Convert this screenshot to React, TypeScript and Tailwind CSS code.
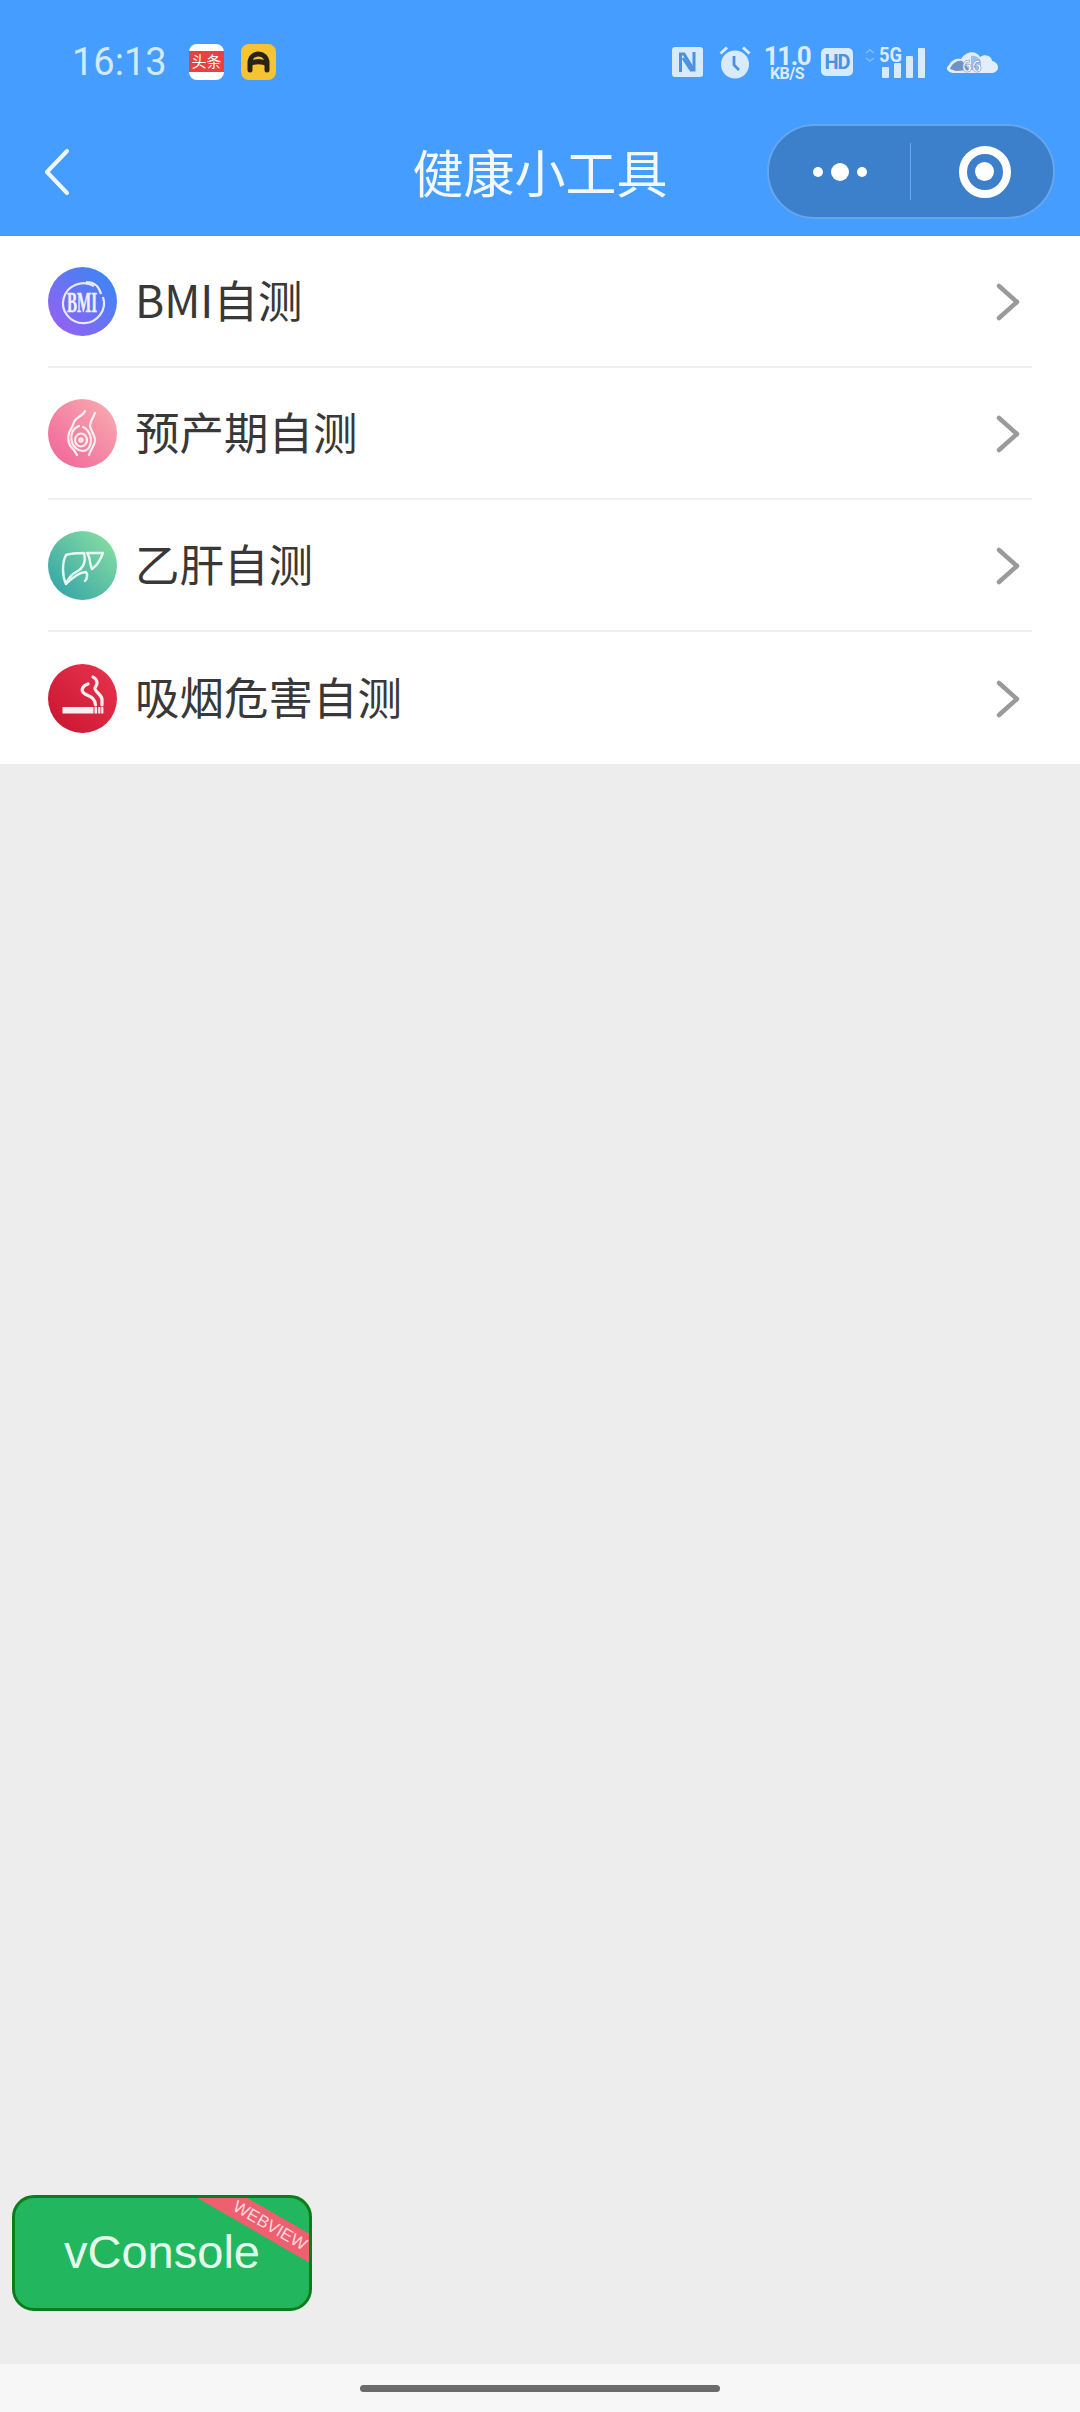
import React from "react";

const Chevron = () => (
  <svg width="24" height="38" viewBox="0 0 24 38" fill="none" className="shrink-0 mt-[2px]">
    <path d="M3 3 L21 19 L3 35" stroke="#9a9a9a" strokeWidth="4.5" strokeLinecap="round" strokeLinejoin="round" />
  </svg>
);

const BmiIcon = () => (
  <svg width="69" height="69" viewBox="0 0 69 69" className="shrink-0 overflow-visible">
    <defs>
      <linearGradient id="bmi" x1="1" y1="0" x2="0" y2="1">
        <stop offset="0" stopColor="#2f8bf5" />
        <stop offset="1" stopColor="#a05cf2" />
      </linearGradient>
    </defs>
    <circle cx="34.5" cy="34.5" r="34.5" fill="url(#bmi)" />
    <path d="M46 19 A20.5 20 0 1 0 55 30" fill="none" stroke="#e8e8ff" strokeWidth="2.2" />
    <path d="M38 15 Q50 15 53 27" fill="none" stroke="#e8e8ff" strokeWidth="2.2" />
    <text x="19" y="45" fontFamily="'Liberation Serif', serif" fontSize="29" fontWeight="700" fill="#eef0ff" stroke="#eef0ff" strokeWidth="0.5" textLength="30" lengthAdjust="spacingAndGlyphs">BMI</text>
  </svg>
);

const PregIcon = () => (
  <svg width="69" height="69" viewBox="0 0 69 69" fill="none" className="shrink-0">
    <defs>
      <linearGradient id="preg" x1="1" y1="0" x2="0" y2="1">
        <stop offset="0" stopColor="#f9b0b0" />
        <stop offset="1" stopColor="#f0609a" />
      </linearGradient>
    </defs>
    <circle cx="34.5" cy="34.5" r="34.5" fill="url(#preg)" />
    <g stroke="#fdeef0" strokeWidth="2.2" strokeLinecap="round">
      <path d="M37 12 C35 17 28 18 26 23 C25 27 23 30 21 34 C19 40 21 46 24 49 C27 52 28 54 29 56" />
      <path d="M47 14 C45 19 42 23 42 27 C43 32 47 36 47 41 C47 46 43 50 41 56" />
      <path d="M31 27 C25 29 22.5 35 23.5 41 C24.5 48 30 52 35 52 C40 52 43 47 43 41 C43 34 38 29 35 28" />
      <ellipse cx="33" cy="41" rx="6" ry="6.5" />
      <circle cx="33" cy="41" r="1.6" />
    </g>
  </svg>
);

const LiverIcon = () => (
  <svg width="69" height="69" viewBox="0 0 69 69" fill="none" className="shrink-0">
    <defs>
      <linearGradient id="liver" x1="1" y1="0" x2="0" y2="1">
        <stop offset="0" stopColor="#8fe3a2" />
        <stop offset="1" stopColor="#2b9fa8" />
      </linearGradient>
    </defs>
    <circle cx="34.5" cy="34.5" r="34.5" fill="url(#liver)" />
    <g stroke="#e4fbf2" strokeWidth="2.4" strokeLinejoin="round" strokeLinecap="round">
      <path d="M18 24 C24 22 30 22 36 22 C38 30 36 37 28 41 C24 43 20 48 18 53 C14 44 14 32 18 24 Z" />
      <path d="M39 22 L55 22 C52 30 47 36 44 38 C41 32 43 27 39 22 Z" />
      <path d="M18 53 C24 47 32 41 38 41 C40 43 39 48 37 50" />
    </g>
  </svg>
);

const SmokeIcon = () => (
  <svg width="69" height="69" viewBox="0 0 69 69" fill="none" className="shrink-0">
    <defs>
      <linearGradient id="smoke" x1="1" y1="0" x2="0" y2="1">
        <stop offset="0" stopColor="#ea3450" />
        <stop offset="1" stopColor="#c7152f" />
      </linearGradient>
    </defs>
    <circle cx="34.5" cy="34.5" r="34.5" fill="url(#smoke)" />
    <rect x="14.5" y="43" width="31" height="6.5" fill="#fbeef0" />
    <rect x="46.5" y="43" width="2.6" height="6.5" fill="#fbeef0" />
    <rect x="50.2" y="43" width="2.2" height="6.5" fill="#fbeef0" />
    <rect x="53.2" y="43" width="2.2" height="6.5" fill="#fbeef0" />
    <g stroke="#fbeef0" strokeWidth="3.2" strokeLinecap="round">
      <path d="M40 20 C34 22 32 27 37 30 C43 33 47 34 47.5 41" />
      <path d="M45 13 C50 16 50 20 47 24 C46 27 53 30 54 35 L54 41" />
    </g>
  </svg>
);

const rows = [
  { label: "BMI自测", icon: <BmiIcon /> },
  { label: "预产期自测", icon: <PregIcon /> },
  { label: "乙肝自测", icon: <LiverIcon /> },
  { label: "吸烟危害自测", icon: <SmokeIcon /> },
];

const StatusIcons = () => (
  <div className="flex items-center">
    <svg width="31" height="30" viewBox="0 0 31 30" className="shrink-0">
      <rect width="31" height="30" rx="3" fill="#d8eafd" />
      <path d="M8.5 25 V7 H12 L21 22" stroke="#4c91e0" strokeWidth="3" fill="none" />
      <path d="M22 5 V23 H19 L11 11" stroke="#4c91e0" strokeWidth="3" fill="none" />
    </svg>
    <svg width="32" height="34" viewBox="0 0 32 34" className="ml-[16px] shrink-0">
      <circle cx="16" cy="19.5" r="14" fill="#d8eafd" />
      <path d="M15 11 L15 20 L20 25" stroke="#4c91e0" strokeWidth="2.8" fill="none" />
      <path d="M1.5 8.5 L8 2.5 M30.5 8.5 L24 2.5" stroke="#d8eafd" strokeWidth="3" />
    </svg>
    <div className="ml-[15px] w-[42px] flex flex-col items-center text-[#dcecfe] font-bold leading-none font-['Roboto',sans-serif]">
      <span className="text-[26px] h-[22px] leading-[22px] tracking-[-1.5px]">11.0</span>
      <span className="text-[16px] h-[13px] leading-[13px] tracking-[-0.5px] whitespace-nowrap">KB/S</span>
    </div>
    <div className="ml-[13px] w-[32px] h-[28px] rounded-[5px] bg-[#d8eafd] flex items-center justify-center text-[#4c91e0] text-[20px] font-bold leading-none tracking-[-1px] font-['Roboto',sans-serif]">
      HD
    </div>
    <svg width="60" height="32" viewBox="0 0 60 32" className="ml-[12px] shrink-0 overflow-visible">
      <text x="14" y="16" fontFamily="Roboto, sans-serif" fontSize="20" fontWeight="700" fill="#dcecfe" textLength="23" lengthAdjust="spacingAndGlyphs">5G</text>
      <path d="M1 7 l4 -3 l4 3 M1 12 l4 3 l4 -3" stroke="#82bdfd" strokeWidth="1.5" fill="none" />
      <rect x="17" y="21" width="7" height="11" rx="1" fill="#d8eafd" />
      <rect x="29" y="17" width="7" height="15" rx="1" fill="#d8eafd" />
      <rect x="41" y="10" width="7" height="22" rx="1" fill="#d8eafd" />
      <rect x="53" y="2" width="7" height="30" rx="1" fill="#d8eafd" />
    </svg>
    <svg width="53" height="23" viewBox="0 0 53 23" className="ml-[21px] shrink-0 overflow-visible">
      <path d="M7 22 C1 21 -1 17 3 14 C6 8 12 7 15 8 C20 0 30 -1 34 6 C40 2 46 6 46 10 C53 11 55 21 46 22 Z" fill="#e2eefc" />
      <path d="M4 18 C6 12 12 9 16 10 L24 19 L10 20 Z" fill="#6f92c4" />
      <path d="M25 5 C30 4 33 7 35 10 L35 19 L25 19 Z" fill="#9dbfe8" />
      <text x="16" y="21" fontFamily="Roboto, sans-serif" fontSize="17" fontWeight="700" fill="#f6faff" stroke="#5f88bf" strokeWidth="0.5">66</text>
    </svg>
  </div>
);

export default function App() {
  return (
    <div className="w-[1080px] h-[2412px] relative overflow-hidden flex flex-col bg-[#ededee] font-['Noto_Sans_CJK_SC','Roboto',sans-serif]">
      <header className="h-[236px] bg-[#459dff] flex flex-col shrink-0">
        <div className="h-[124px] pl-[72px] pr-[81px] flex items-center justify-between">
          <div className="flex items-center">
            <span className="w-[92px] text-[38px] leading-none text-[#d2e9fd] font-['Roboto',sans-serif] whitespace-nowrap">16:13</span>
            <svg width="35" height="36" viewBox="0 0 35 36" className="ml-[25px] shrink-0">
              <rect width="35" height="36" rx="8" fill="#ffffff" />
              <rect y="7" width="35" height="21" fill="#e8413f" />
              <text x="17.5" y="23" textAnchor="middle" fontFamily="'Noto Sans CJK SC', sans-serif" fontSize="15" fill="#ffffff">头条</text>
            </svg>
            <svg width="35" height="36" viewBox="0 0 35 36" className="ml-[17px] shrink-0">
              <rect width="35" height="36" rx="8" fill="#f6c433" />
              <path d="M9 26 V19 C9 7 26 7 26 19 V26" fill="none" stroke="#2a2316" strokeWidth="5" strokeLinecap="round" />
              <path d="M8 20 C14 17 21 17 27 20" stroke="#2a2316" strokeWidth="5" fill="none" />
            </svg>
          </div>
          <StatusIcons />
        </div>
        <div className="h-[95px] grid grid-cols-[1fr_auto_1fr] items-center">
          <div className="pl-[44px]">
            <svg width="26" height="46" viewBox="0 0 26 46" fill="none">
              <path d="M23 2 L3 23 L23 44" stroke="#eef6ff" strokeWidth="4" strokeLinejoin="round" strokeLinecap="round" />
            </svg>
          </div>
          <div className="text-[51px] leading-none text-[#f2f8ff] whitespace-nowrap">健康小工具</div>
          <div className="flex justify-end pr-[25px]">
            <div className="w-[288px] h-[95px] rounded-full bg-[#3c7fcb] border-2 border-[#66a6ec] flex items-center">
              <div className="w-[141px] flex items-center justify-center gap-[8px]">
                <span className="w-[10px] h-[10px] rounded-full bg-white" />
                <span className="w-[18px] h-[18px] rounded-full bg-white" />
                <span className="w-[10px] h-[10px] rounded-full bg-white" />
              </div>
              <div className="w-[1px] h-[57px] bg-[#6ea8e6]" />
              <div className="flex-1 flex items-center justify-center pl-[5px]">
                <div className="w-[52px] h-[52px] rounded-full border-[8px] border-white flex items-center justify-center">
                  <span className="w-[19px] h-[19px] rounded-full bg-white" />
                </div>
              </div>
            </div>
          </div>
        </div>
      </header>

      <main className="bg-white shrink-0 px-[48px]">
        {rows.map((r, i) => (
          <div
            key={r.label}
            className={`h-[132px] flex items-center ${i < rows.length - 1 ? "border-b-2 border-[#f0f0f0]" : ""}`}
          >
            {r.icon}
            <span className="ml-[18px] mb-[4px] text-[44.5px] leading-none text-[#383838] flex-1 whitespace-nowrap">{r.label}</span>
            <div className="pr-[12px]">
              <Chevron />
            </div>
          </div>
        ))}
      </main>

      <div className="flex-1" />

      <footer className="h-[48px] bg-[#f7f7f8] shrink-0 flex items-center justify-center">
        <div className="w-[360px] h-[7px] rounded-full bg-[#6b6b6b]" />
      </footer>

      <div className="absolute left-[12px] top-[2195px] w-[300px] h-[116px] rounded-[22px] bg-[#22b75f] border-[3px] border-[#0d7d1a] overflow-hidden flex items-center justify-center">
        <span className="mb-[3px] text-[47px] leading-none text-[#e4fbec] font-['Liberation_Sans',sans-serif]">vConsole</span>
        <div className="absolute left-[155px] top-[15px] w-[200px] h-[25px] rotate-[30deg] bg-[#ee5f70] flex items-center justify-center text-[17px] leading-none text-[#ffd9dd] font-['Liberation_Sans',sans-serif]">
          WEBVIEW
        </div>
      </div>
    </div>
  );
}
